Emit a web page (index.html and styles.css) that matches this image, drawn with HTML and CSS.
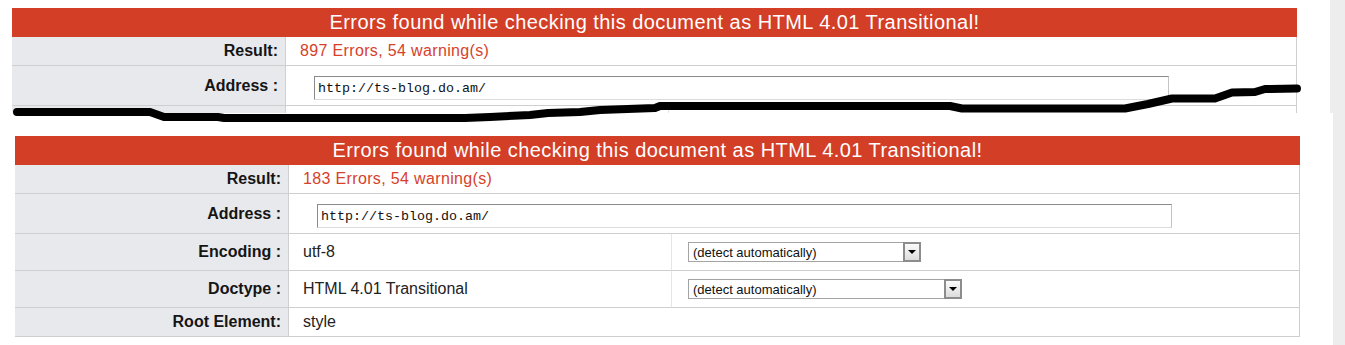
FILE: index.html
```html
<!DOCTYPE html>
<html>
<head>
<meta charset="utf-8">
<title>Validation result</title>
<link rel="stylesheet" href="styles.css">
</head>
<body>
<div class="page">
  <section class="shot shot-top">
    <div class="report">
      <div class="head">Errors found while checking this document as HTML 4.01 Transitional!</div>
      <div class="label h-short">Result:</div>
      <div class="value span2 h-short"><span class="err">897 Errors, 54 warning(s)</span></div>
      <div class="label h-addr">Address :</div>
      <div class="value span2 h-addr top"><div class="field">http://ts-blog.do.am/</div></div>
      <div class="label h-mid"></div>
      <div class="value mid h-mid"></div>
      <div class="value last h-mid"></div>
    </div>
  </section>
  <section class="shot shot-bottom">
    <div class="report">
      <div class="head">Errors found while checking this document as HTML 4.01 Transitional!</div>
      <div class="label h-short">Result:</div>
      <div class="value span2 h-short"><span class="err">183 Errors, 54 warning(s)</span></div>
      <div class="label h-addr">Address :</div>
      <div class="value span2 h-addr top"><div class="field">http://ts-blog.do.am/</div></div>
      <div class="label h-mid">Encoding :</div>
      <div class="value mid h-mid">utf-8</div>
      <div class="value last h-mid"><div class="select w1"><span>(detect automatically)</span><i class="btn"></i></div></div>
      <div class="label h-mid">Doctype :</div>
      <div class="value mid h-mid">HTML 4.01 Transitional</div>
      <div class="value last h-mid"><div class="select w2"><span>(detect automatically)</span><i class="btn"></i></div></div>
      <div class="label h-short">Root Element:</div>
      <div class="value span2 h-short">style</div>
    </div>
  </section>
  <svg class="scribble" width="1345" height="130" viewBox="0 0 1345 130">
    <polyline fill="none" stroke="#000" stroke-width="8" stroke-linecap="round" stroke-linejoin="round"
      points="17,112 150,112 164,117 218,117 224,118 465,118 490,117 530,115 548,113 580,112 600,110 655,108 660,106 950,106 962,108.5 1125,108.5 1148,104 1172,98.5 1215,98.5 1232,92.5 1255,92 1265,89 1297,88.5"/>
  </svg>
</div>
</body>
</html>
```

FILE: styles.css
```css
html, body {
  margin: 0;
  padding: 0;
}

body {
  background: #ededed;
  font-family: "Liberation Sans", Arial, sans-serif;
  color: #222;
}

.page {
  position: relative;
  width: 1345px;
  height: 345px;
  overflow: hidden;
}

.shot {
  background: #fff;
  box-sizing: border-box;
  overflow: hidden;
}

.shot-top {
  width: 1330px;
  height: 113px;
  padding: 8px 0 0 12px;
}

.shot-bottom {
  width: 1333px;
  height: 232px;
  padding: 23px 0 0 15px;
}

.report {
  display: grid;
  grid-template-columns: 274px 383px 1fr;
  width: 1285px;
}

.head {
  grid-column: 1 / -1;
  height: 29px;
  line-height: 29px;
  background: #d33e26;
  color: #fff;
  font-size: 20px;
  letter-spacing: 0.45px;
  text-align: center;
}

.label,
.value {
  box-sizing: border-box;
  display: flex;
  align-items: center;
  border-bottom: 1px solid #cfcfcf;
  font-size: 16px;
}

.label {
  justify-content: flex-end;
  padding-right: 7px;
  background: #e8e9ed;
  border-right: 1px solid #cfcfcf;
  font-weight: bold;
  color: #151515;
}

.value {
  padding-left: 14px;
  border-right: 1px solid #cfcfcf;
}

.span2 {
  grid-column: 2 / 4;
}

.mid {
  border-right: 1px solid #e6e6e6;
}

.last {
  padding-left: 16px;
}

.h-short { height: 29px; }
.h-addr { height: 40px; }
.h-mid { height: 37px; }

.top {
  align-items: flex-start;
  padding-top: 10px;
  padding-left: 28px;
}

.err {
  color: #d6412b;
  letter-spacing: 0.35px;
}

.field {
  box-sizing: border-box;
  width: 855px;
  height: 24px;
  padding: 4px 0 0 3px;
  border: 1px solid;
  border-color: #8a8a8a #c4c4c4 #dcdcdc #8a8a8a;
  font-family: "Liberation Mono", "Courier New", monospace;
  font-size: 13.33px;
  color: #111;
}

.select {
  box-sizing: border-box;
  display: flex;
  align-items: center;
  justify-content: space-between;
  height: 20px;
  border: 1px solid #a4a4a4;
  font-size: 13px;
  color: #111;
}

.select span {
  padding-left: 4px;
}

.w1 { width: 233px; }
.w2 { width: 274px; }

.btn {
  position: relative;
  box-sizing: border-box;
  width: 18px;
  height: 20px;
  margin: -1px -1px -1px 0;
  border: 2px solid #8c8c8c;
  background: linear-gradient(#fbfbfb, #dcdcdc);
}

.btn::after {
  content: "";
  position: absolute;
  left: 3px;
  top: 6px;
  border-left: 4px solid transparent;
  border-right: 4px solid transparent;
  border-top: 4px solid #000;
}

.scribble {
  position: absolute;
  left: 0;
  top: 0;
  pointer-events: none;
}
```
